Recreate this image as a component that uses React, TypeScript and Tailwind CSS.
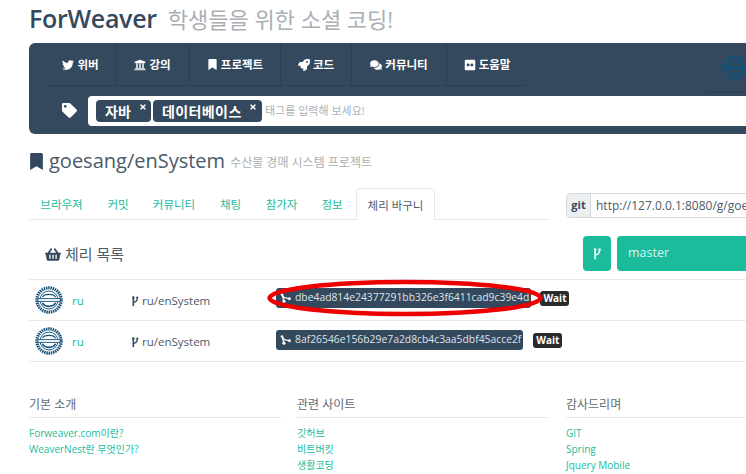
import { FaBookmark, FaComments, FaFlickr, FaRocket, FaShoppingBasket, FaTag, FaTimes, FaTwitter, FaUniversity } from "react-icons/fa"

const font = "font-['Open_Sans','Noto_Sans_CJK_KR',sans-serif]"

function Branch({ className }: { className: string }) {
  return (
    <svg viewBox="0 0 12 16" className={className} fill="none" stroke="currentColor">
      <path d="M3.5 1v14" strokeWidth="2.4" />
      <path d="M3.5 9.5C7.5 9 9.5 6.5 9.5 2" strokeWidth="2" />
      <circle cx="9.5" cy="2" r="1.6" fill="currentColor" stroke="none" />
      <circle cx="3.5" cy="2" r="1.8" fill="currentColor" stroke="none" />
    </svg>
  )
}

function CommitIcon() {
  return (
    <svg viewBox="0 0 14 14" className="h-[12px] w-[11px] shrink-0" fill="white">
      <circle cx="2.5" cy="2.5" r="1.6" />
      <circle cx="5" cy="11" r="2" />
      <circle cx="12" cy="8" r="1.8" />
      <path d="M2.5 2.5 5 11M2.5 2.5 5.5 6.5 12 8" stroke="white" strokeWidth="1.5" fill="none" />
    </svg>
  )
}

function Seal({ className, band = "white" }: { className: string; band?: string }) {
  return (
    <svg viewBox="0 0 30 30" className={className} fill="none">
      <circle cx="15" cy="15" r="13" stroke="#14537a" strokeWidth="3.4" strokeDasharray="1.6 0.8" />
      <circle cx="15" cy="15" r="9.6" stroke="#14537a" strokeWidth="1" />
      <path d="M3 13.5h24v3H3z" fill={band} stroke="#14537a" strokeWidth="1" />
      <path d="M8 18c2 5 12 5 14 0" stroke="#14537a" strokeWidth="1.8" />
      <path d="M8 12c2-4 12-4 14 0" stroke="#14537a" strokeWidth="1.4" />
    </svg>
  )
}

const navItems = [
  { icon: <FaTwitter />, label: "위버", w: "w-[70px]" },
  { icon: <FaUniversity />, label: "강의", w: "w-[74px]" },
  { icon: <FaBookmark className="text-[11px]" />, label: "프로젝트", w: "w-[91px]" },
  { icon: <FaRocket />, label: "코드", w: "w-[71px]" },
  { icon: <FaComments />, label: "커뮤니티", w: "w-[95px]" },
  { icon: <FaFlickr />, label: "도움말", w: "w-[80px]" },
]

const tabs = [
  { label: "브라우져", w: "w-[65px]" },
  { label: "커밋", w: "w-[48px]" },
  { label: "커뮤니티", w: "w-[64px]" },
  { label: "채팅", w: "w-[49px]" },
  { label: "참가자", w: "w-[53px]" },
  { label: "정보", w: "w-[48px]" },
]

const footer = [
  { title: "기본 소개", w: "w-[268px]", links: ["Forweaver.com이란?", "WeaverNest란 무엇인가?"] },
  { title: "관련 사이트", w: "w-[269px]", links: ["깃허브", "비트버킷", "생활코딩"] },
  { title: "감사드리며", w: "w-[252px]", links: ["GIT", "Spring", "Jquery Mobile"] },
]

const rows = [
  { hash: "dbe4ad814e24377291bb326e3f6411cad9c39e4d", waitMl: "ml-[3px]", lift: "mb-[4px]", ring: true },
  { hash: "8af26546e156b29e7a2d8cb4c3aa5dbf45acce2f", waitMl: "ml-[10px]", lift: "mb-[2px]", ring: false },
]

export default function App() {
  return (
    <div className={`${font} relative h-[474px] w-[746px] overflow-hidden bg-white pl-[29px] text-[#34495e]`}>
      <header className="flex h-[43px] w-[760px] items-center pb-[5px]">
        <span className="text-[25px] font-semibold tracking-[-0.3px] text-[#34495e]">ForWeaver</span>
        <span className="ml-[11px] text-[22px] text-[#a9afb4]">학생들을 위한 소셜 코딩!</span>
      </header>

      <nav className="h-[91px] w-[760px] rounded-[6px] bg-[#34495e]">
        <div className="flex h-[53px] w-[757px] pl-[17px]">
          <div className="flex h-[43px] w-[481px] shrink-0 border-b border-[#2d3e50]">
            {navItems.map((item) => (
              <div key={item.label} className={`${item.w} flex items-center justify-center gap-[3px] border-r border-[#2d3e50] pt-[1px] text-[11.5px] font-bold text-white last:border-r-0`}>
                <span className="text-[12px]">{item.icon}</span>
                {item.label}
              </div>
            ))}
          </div>
          <div className="ml-[178px] h-[49px] w-[60px] shrink-0 border-b border-[#2d3e50] pl-[17px] pt-[12px]">
            <Seal className="h-[25px] w-[25px]" band="#14537a" />
          </div>
        </div>
        <div className="flex items-start">
          <FaTag className="ml-[33px] mt-[7px] h-[15px] w-[15px] text-white" />
          <div className="ml-[11px] flex h-[30px] w-[680px] items-center rounded-[4px] bg-white pl-[8px]">
            <span className="flex h-[22px] w-[55px] items-start rounded-[4px] bg-[#34495e] pl-[9px] pt-[1px] text-[14px] font-bold text-white">
              자바
              <FaTimes className="ml-[8px] mt-[2px] text-[8px]" />
            </span>
            <span className="ml-[2px] flex h-[22px] w-[109px] items-start rounded-[4px] bg-[#34495e] pl-[9px] pt-[1px] text-[14px] font-bold tracking-[0.4px] text-white">
              데이터베이스
              <FaTimes className="ml-[7px] mt-[2px] text-[8px]" />
            </span>
            <span className="ml-[3px] text-[11px] text-[#aab2b9]">태그를 입력해 보세요!</span>
          </div>
        </div>
      </nav>

      <div className="mt-[16px] flex h-[22px] items-center">
        <FaBookmark className="h-[17px] w-[15px] text-[#34495e]" />
        <span className="ml-[5px] text-[20px] leading-none text-[#4a5a69]">goesang/enSystem</span>
        <span className="ml-[5px] mt-[3px] text-[12px] text-[#a9afb4]">수산물 경매 시스템 프로젝트</span>
      </div>

      <div className="mt-[16px] flex h-[32px] w-[738px] items-start">
        <div className="flex h-[32px] w-[521px] shrink-0 border-b border-[#e7e9ec]">
          {tabs.map((tab) => (
            <span key={tab.label} className={`${tab.w} pt-[8px] text-center text-[11.5px] text-[#1abc9c]`}>{tab.label}</span>
          ))}
          <span className="-mb-px h-[32px] w-[79px] rounded-t-[4px] border border-b-0 border-[#e7e9ec] bg-white pt-[8px] text-center text-[11.5px] text-[#4c5b68]">체리 바구니</span>
        </div>
        <div className="ml-[16px] mt-[5px] flex h-[25px] w-[200px] shrink-0 overflow-hidden rounded-l-[4px] border border-[#d5d8dc]">
          <span className="flex w-[23px] shrink-0 items-center justify-center bg-[#ecf0f1] text-[11px] font-bold text-[#34495e]">git</span>
          <span className="whitespace-nowrap border-l border-[#d5d8dc] pl-[5px] text-[12px] leading-[23px] text-[#4c5b68]">http://127.0.0.1:8080/g/goesang/enSystem.git</span>
        </div>
      </div>

      <div className="flex h-[60px] w-[717px] border-b border-[#e7e9ec] pt-[16px]">
        <div className="flex h-[36px] w-[554px] shrink-0 items-center pl-[16px]">
          <FaShoppingBasket className="h-[15px] w-[16px] text-[#34495e]" />
          <span className="ml-[4px] text-[15px] text-[#4c5b68]">체리 목록</span>
        </div>
        <div className="flex h-[35px] w-[28px] shrink-0 items-center justify-center rounded-[4px] bg-[#1abc9c] text-[#e8f8f5]">
          <Branch className="h-[12px] w-[10px]" />
        </div>
        <div className="ml-[6px] flex h-[35px] w-[140px] shrink-0 items-center rounded-l-[4px] bg-[#1abc9c] pl-[11px] text-[12.5px] text-[#d9f5ee]">master</div>
      </div>

      {rows.map((row) => (
        <div key={row.hash} className="relative flex h-[41px] w-[717px] items-center border-b border-[#e7e9ec] last:border-b-0">
          <Seal className="ml-[6px] h-[28px] w-[28px] shrink-0" />
          <span className="ml-[9px] mt-[2px] w-[59px] text-[11.5px] text-[#1abc9c]">ru</span>
          <Branch className="mt-[2px] h-[11px] w-[8px] text-[#34495e]" />
          <span className="ml-[3px] mt-[2px] w-[134px] text-[11.5px] text-[#4c5b68]">ru/enSystem</span>
          <span className={`${row.lift} flex h-[20px] items-center gap-[4px] rounded-[3px] bg-[#34495e] pl-[4px] pr-[2px] text-[10.35px] text-[#dfe4e8]`}>
            <CommitIcon />
            {row.hash}
          </span>
          {row.ring && <span className={`${row.lift} h-0 w-0 border-y-[5px] border-l-[6px] border-y-transparent border-l-white`} />}
          <span className={`${row.waitMl} ${row.lift} rounded-[3px] bg-[#2b2b2b] px-[3px] text-[10px] font-bold leading-[15px] text-white`}>Wait</span>
          {row.ring && (
            <svg viewBox="0 0 278 38" className="pointer-events-none absolute left-[237px] top-[-1px] h-[38px] w-[278px]" fill="none">
              <ellipse cx="139" cy="19" rx="135.5" ry="16" stroke="#ee0000" strokeWidth="4.5" />
            </svg>
          )}
        </div>
      ))}

      <footer className="mt-[34px] flex w-[800px]">
        {footer.map((col) => (
          <div key={col.title} className={col.w}>
            <h4 className="w-[252px] border-b border-[#e7e9ec] pb-[3px] text-[12px] font-normal text-[#5e6b76]">{col.title}</h4>
            <ul className="mt-[7px] flex flex-col text-[10px] leading-[16px] text-[#1abc9c]">
              {col.links.map((link) => (
                <li key={link}>{link}</li>
              ))}
            </ul>
          </div>
        ))}
      </footer>
    </div>
  )
}
